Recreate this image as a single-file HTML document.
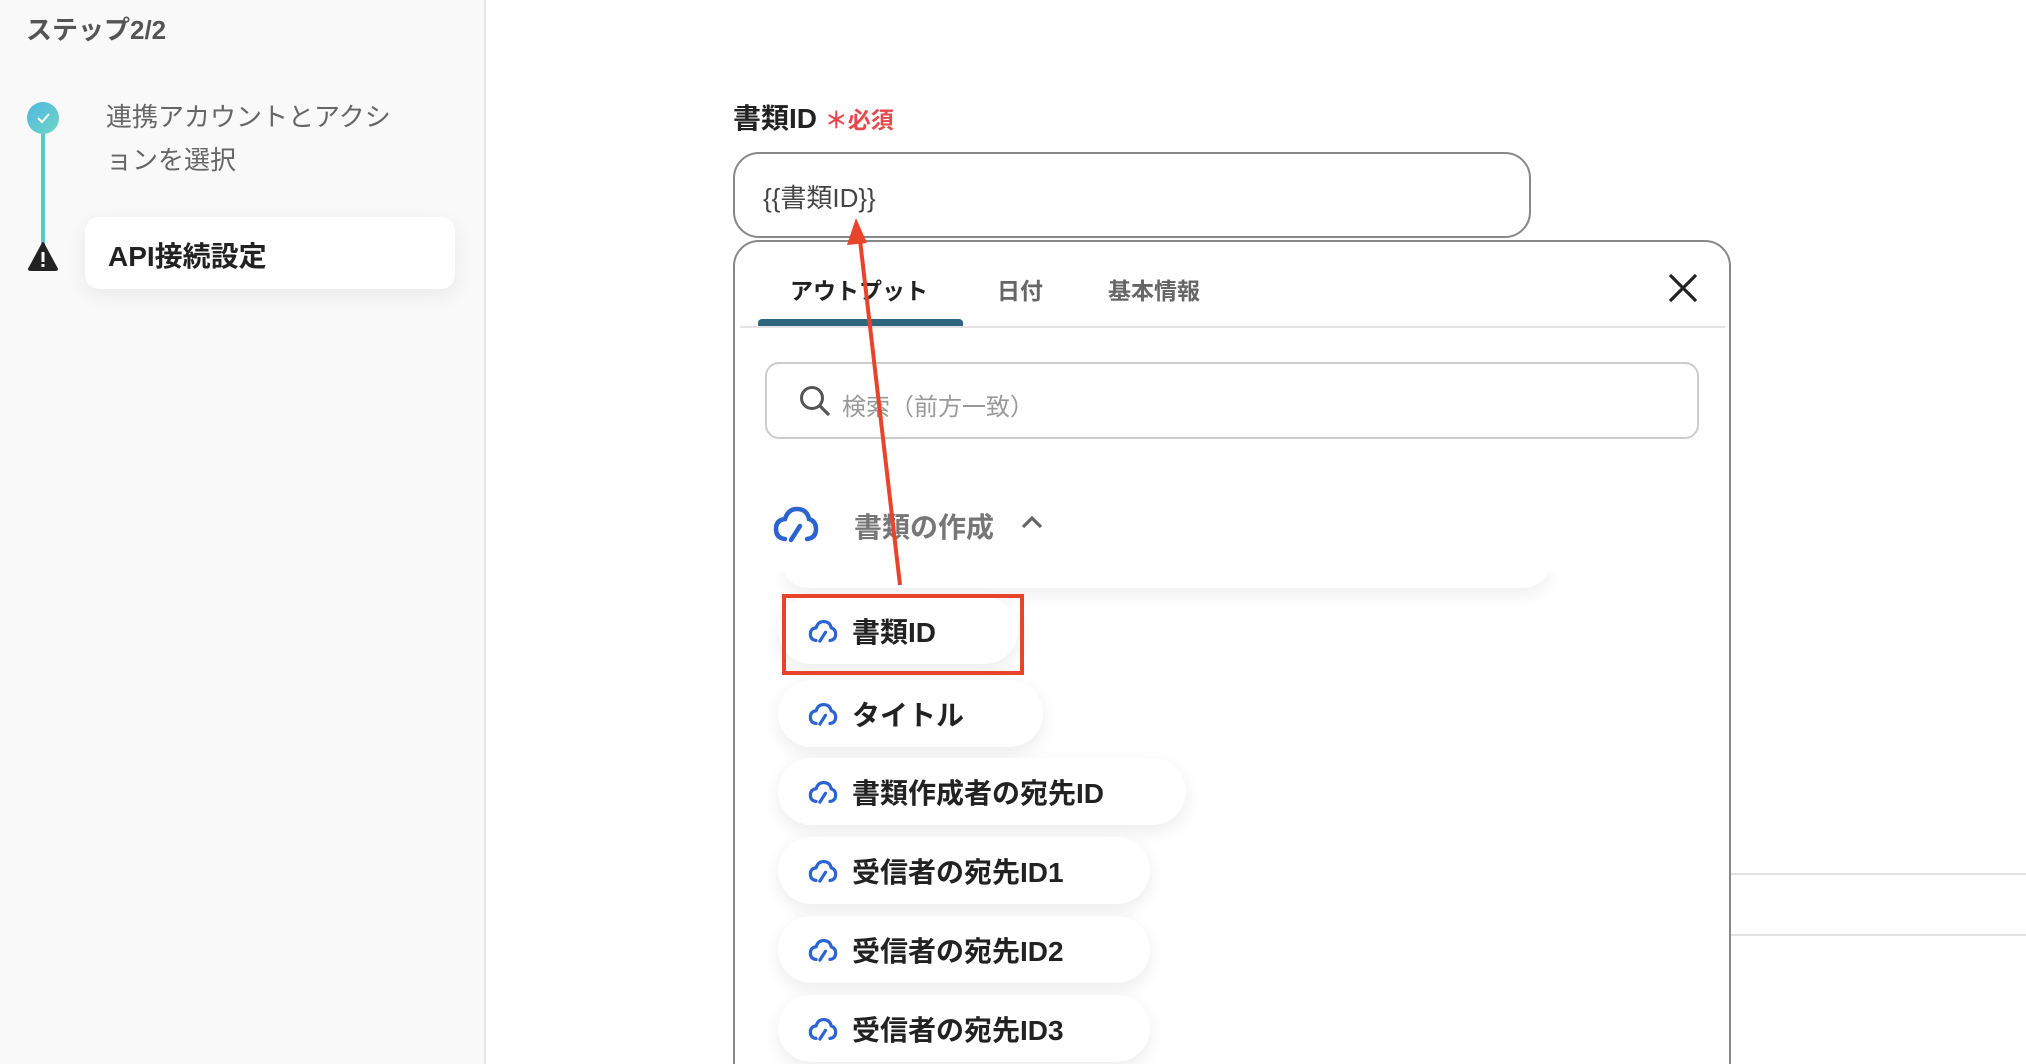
<!DOCTYPE html>
<html style="width:2026px;height:1064px;overflow:hidden"><head><meta charset="utf-8"><style>
*{margin:0;padding:0;box-sizing:border-box}
body{width:2026px;height:1064px;overflow:hidden;background:#fff;font-family:"Liberation Sans","Noto Sans CJK JP",sans-serif;position:relative}
.abs{position:absolute}
.side{left:0;top:0;width:486px;height:1064px;background:#f9f9f9;border-right:2px solid #e6e6e6}
.pill{position:absolute;left:778px;height:67px;border-radius:34px;background:#fff;box-shadow:0 6px 18px rgba(0,0,0,0.08);display:flex;align-items:center;padding-left:30px;font-size:28px;font-weight:bold;color:#222;white-space:nowrap}
.pill svg{margin-right:14px}
</style></head><body>
<div class="abs side"></div>
<div class="abs" style="left:26px;top:10px;font-size:26px;font-weight:bold;color:#555">ステップ2/2</div>
<div class="abs" style="left:41px;top:118px;width:4px;height:130px;background:#5bc8cf"></div>
<div class="abs" style="left:27px;top:102px;width:32px;height:32px;border-radius:50%;background:linear-gradient(135deg,#4eb6e0,#6fd6c5)"></div>
<svg class="abs" style="left:33px;top:108px" width="20" height="20" viewBox="0 0 20 20"><path d="M5 10 l4 4 l7-8" stroke="#fff" stroke-width="2" fill="none"/></svg>
<svg class="abs" style="left:27px;top:241px" width="32" height="30" viewBox="0 0 32 30"><path d="M16 2 L30 28 Q30 29 28 29 L4 29 Q2 29 2 28 Z" fill="#222" stroke="#222" stroke-width="2" stroke-linejoin="round"/><rect x="14.5" y="11" width="3" height="10" fill="#fff"/><rect x="14.5" y="23" width="3" height="3" fill="#fff"/></svg>
<div class="abs" style="left:106px;top:96px;font-size:26px;line-height:43px;color:#666;width:330px">連携アカウントとアクシ<br>ョンを選択</div>
<div class="abs" style="left:85px;top:217px;width:370px;height:72px;background:#fff;border-radius:14px;box-shadow:0 6px 20px rgba(0,0,0,0.07)"></div>
<div class="abs" style="left:108px;top:235px;font-size:28px;font-weight:bold;color:#222">API接続設定</div>

<div class="abs" style="left:733px;top:97px;font-size:28px;font-weight:bold;color:#222">書類ID <span style="color:#e5484d;font-size:23px">＊必須</span></div>
<div class="abs" style="left:733px;top:152px;width:798px;height:86px;border:2px solid #888;border-radius:26px;font-size:26px;color:#444;padding:24px 0 0 28px">{{書類ID}}</div>

<div class="abs" style="left:1731px;top:873px;width:295px;height:2px;background:#e2e2e2"></div>
<div class="abs" style="left:1731px;top:934px;width:295px;height:2px;background:#e2e2e2"></div>

<div class="abs" style="left:733px;top:240px;width:998px;height:850px;border:2px solid #888;border-radius:26px;background:#fff"></div>
<div class="abs" style="left:790px;top:272px;font-size:23px;font-weight:bold;color:#222">アウトプット</div>
<div class="abs" style="left:997px;top:272px;font-size:23px;font-weight:bold;color:#666">日付</div>
<div class="abs" style="left:1108px;top:272px;font-size:23px;font-weight:bold;color:#666">基本情報</div>
<div class="abs" style="left:740px;top:326px;width:985px;height:2px;background:#e4e4e4"></div>
<div class="abs" style="left:758px;top:319px;width:205px;height:7px;background:#2e6680;border-radius:4px 4px 0 0"></div>
<svg class="abs" style="left:1667px;top:272px" width="32" height="32" viewBox="0 0 32 32"><path d="M3 3L29 29M29 3L3 29" stroke="#222" stroke-width="3.2"/></svg>
<div class="abs" style="left:765px;top:362px;width:934px;height:77px;border:2px solid #ccc;border-radius:14px"></div>
<svg class="abs" style="left:798px;top:384px" width="34" height="34" viewBox="0 0 34 34"><circle cx="14" cy="14" r="10.5" stroke="#555" stroke-width="3" fill="none"/><path d="M22 22L31 31" stroke="#555" stroke-width="3.2"/></svg>
<div class="abs" style="left:842px;top:387px;font-size:24px;color:#999">検索（前方一致）</div>

<svg class="abs" style="left:773px;top:505px" width="46" height="38" viewBox="0 0 46 38"><path d="M12 34 Q3 33 3 24 Q3 15 12 14 Q15 4 24 4 Q34 4 36 14 Q43 16 43 24 Q43 33 34 34" stroke="#2b63d0" stroke-width="4.5" fill="none" stroke-linecap="round"/><path d="M18 35 L27 21" stroke="#2b63d0" stroke-width="4.5" stroke-linecap="round"/></svg>
<div class="abs" style="left:854px;top:506px;font-size:28px;font-weight:bold;color:#777">書類の作成</div>
<svg class="abs" style="left:1020px;top:514px" width="24" height="16" viewBox="0 0 24 16"><path d="M3 13L12 4L21 13" stroke="#666" stroke-width="3.2" fill="none"/></svg>
<div class="abs" style="left:782px;top:560px;width:768px;height:28px;border-radius:0 0 26px 26px;background:#fff;box-shadow:0 8px 16px rgba(0,0,0,0.06)"></div>
<div class="abs" style="left:773px;top:548px;width:790px;height:24px;background:#fff"></div>

<div class="pill" style="top:597px;width:240px"><svg width="30" height="24" viewBox="0 0 46 38"><path d="M12 34 Q3 33 3 24 Q3 15 12 14 Q15 4 24 4 Q34 4 36 14 Q43 16 43 24 Q43 33 34 34" stroke="#2b63d0" stroke-width="5" fill="none" stroke-linecap="round"/><path d="M18 35 L27 21" stroke="#2b63d0" stroke-width="5" stroke-linecap="round"/></svg>書類ID</div>
<div class="pill" style="top:680px;width:265px"><svg width="30" height="24" viewBox="0 0 46 38"><path d="M12 34 Q3 33 3 24 Q3 15 12 14 Q15 4 24 4 Q34 4 36 14 Q43 16 43 24 Q43 33 34 34" stroke="#2b63d0" stroke-width="5" fill="none" stroke-linecap="round"/><path d="M18 35 L27 21" stroke="#2b63d0" stroke-width="5" stroke-linecap="round"/></svg>タイトル</div>
<div class="pill" style="top:758px;width:408px"><svg width="30" height="24" viewBox="0 0 46 38"><path d="M12 34 Q3 33 3 24 Q3 15 12 14 Q15 4 24 4 Q34 4 36 14 Q43 16 43 24 Q43 33 34 34" stroke="#2b63d0" stroke-width="5" fill="none" stroke-linecap="round"/><path d="M18 35 L27 21" stroke="#2b63d0" stroke-width="5" stroke-linecap="round"/></svg>書類作成者の宛先ID</div>
<div class="pill" style="top:837px;width:372px"><svg width="30" height="24" viewBox="0 0 46 38"><path d="M12 34 Q3 33 3 24 Q3 15 12 14 Q15 4 24 4 Q34 4 36 14 Q43 16 43 24 Q43 33 34 34" stroke="#2b63d0" stroke-width="5" fill="none" stroke-linecap="round"/><path d="M18 35 L27 21" stroke="#2b63d0" stroke-width="5" stroke-linecap="round"/></svg>受信者の宛先ID1</div>
<div class="pill" style="top:916px;width:372px"><svg width="30" height="24" viewBox="0 0 46 38"><path d="M12 34 Q3 33 3 24 Q3 15 12 14 Q15 4 24 4 Q34 4 36 14 Q43 16 43 24 Q43 33 34 34" stroke="#2b63d0" stroke-width="5" fill="none" stroke-linecap="round"/><path d="M18 35 L27 21" stroke="#2b63d0" stroke-width="5" stroke-linecap="round"/></svg>受信者の宛先ID2</div>
<div class="pill" style="top:995px;width:372px"><svg width="30" height="24" viewBox="0 0 46 38"><path d="M12 34 Q3 33 3 24 Q3 15 12 14 Q15 4 24 4 Q34 4 36 14 Q43 16 43 24 Q43 33 34 34" stroke="#2b63d0" stroke-width="5" fill="none" stroke-linecap="round"/><path d="M18 35 L27 21" stroke="#2b63d0" stroke-width="5" stroke-linecap="round"/></svg>受信者の宛先ID3</div>

<div class="abs" style="left:782px;top:594px;width:242px;height:81px;border:4px solid #e8432b"></div>
<svg class="abs" style="left:0;top:0" width="2026" height="1064"><path d="M900 585 L860 240" stroke="#e8432b" stroke-width="4"/><path d="M856 218 L847 245 L867 243 Z" fill="#e8432b"/></svg>
</body></html>
